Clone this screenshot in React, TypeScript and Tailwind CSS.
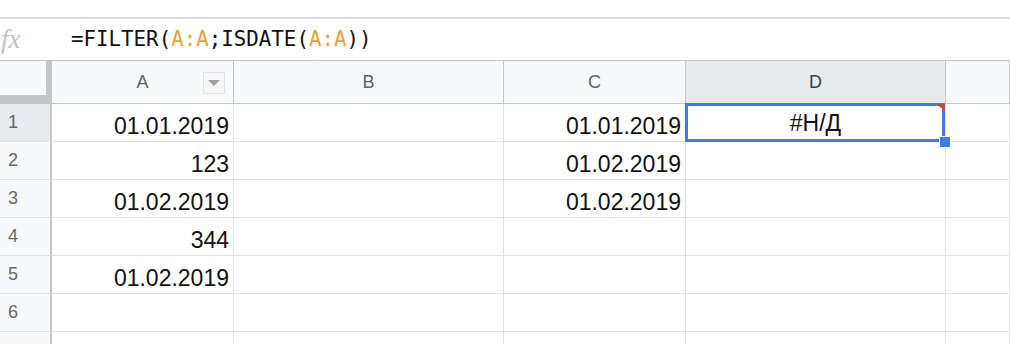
const cols = [
  { key: "A", w: "w-[182px]" },
  { key: "B", w: "w-[270px]" },
  { key: "C", w: "w-[182px]" },
  { key: "D", w: "w-[260px]" },
  { key: "E", w: "flex-1" },
];

const data: Record<number, Record<string, string>> = {
  1: { A: "01.01.2019", C: "01.01.2019" },
  2: { A: "123", C: "01.02.2019" },
  3: { A: "01.02.2019", C: "01.02.2019" },
  4: { A: "344" },
  5: { A: "01.02.2019" },
  6: {},
  7: {},
};

const cellFont = { fontFamily: '"Liberation Sans", Arial, sans-serif' };

function Formula() {
  return (
    <div className="flex h-[42px] items-center border-b border-[#c4c7c5] bg-white">
      <div
        className="w-[71px] pl-[1px] text-[27px] italic leading-none text-[#c2c2c2]"
        style={{ fontFamily: '"Liberation Serif", "Times New Roman", serif' }}
      >
        fx
      </div>
      <div
        className="text-[20.8px] leading-none text-[#111]"
        style={{ fontFamily: '"DejaVu Sans Mono", "Liberation Mono", monospace' }}
      >
        =FILTER(<span className="text-[#e9a23b]">A:A</span>;ISDATE(<span className="text-[#e9a23b]">A:A</span>))
      </div>
    </div>
  );
}

function HeaderRow() {
  return (
    <div className="flex h-[43px] border-b border-[#c4c7c5] bg-[#f8f9fa]" style={cellFont}>
      <div className="w-[52px] shrink-0 border-r-[6px] border-b-[8px] border-[#c4c7c5] bg-[#f8f9fa]" />
      {cols.map((c) => (
        <div
          key={c.key}
          className={`${c.w} relative flex shrink-0 items-center justify-center border-r border-[#c4c7c5] text-[18px] ${
            c.key === "D" ? "bg-[#e8eaed] text-[#3c4043]" : "text-[#5f6368]"
          }`}
        >
          {c.key === "E" ? "" : c.key}
          {c.key === "A" && (
            <div className="absolute right-[8px] top-[11px] flex h-[22px] w-[22px] items-center justify-center border border-[#e3e3e3] bg-[#f6f6f6]">
              <div className="h-0 w-0 border-x-[6px] border-t-[6px] border-x-transparent border-t-[#a0a0a0]" />
            </div>
          )}
        </div>
      ))}
    </div>
  );
}

function Row({ n }: { n: number }) {
  const row = data[n];
  return (
    <div className="flex h-[38px] shrink-0" style={cellFont}>
      <div
        className={`flex w-[52px] shrink-0 items-center border-r-2 border-b border-r-[#c4c7c5] border-b-[#e2e3e3] pl-[8px] text-[18px] text-[#666] ${
          n === 1 ? "bg-[#e8eaed]" : "bg-[#f8f9fa]"
        }`}
      >
        {n < 7 ? n : ""}
      </div>
      {cols.map((c) => {
        const selected = n === 1 && c.key === "D";
        return (
          <div
            key={c.key}
            className={`${c.w} relative flex shrink-0 items-end border-r border-b border-[#e2e3e3] text-[23px] leading-[25px] text-[#111] ${
              selected ? "z-10 justify-center pb-[5px]" : "justify-end pb-[2px] pr-[4px]"
            }`}
          >
            {selected ? "#Н/Д" : row[c.key] ?? ""}
            {selected && (
              <>
                <div className="pointer-events-none absolute -left-[1px] -top-[1px] bottom-[-1px] right-0 border-[3px] border-[#3d7ee0]" />
                <div className="absolute right-0 top-0 h-0 w-0 border-l-[9px] border-t-[7px] border-l-transparent border-t-[#c64a3b]" />
                <div className="absolute -bottom-[7px] -right-[6px] h-[12px] w-[12px] border border-white bg-[#3d7ee0]" />
              </>
            )}
          </div>
        );
      })}
    </div>
  );
}

export default function App() {
  return (
    <div className="h-[344px] w-[1010px] overflow-hidden bg-white">
      <div className="h-[19px] border-b-2 border-[#dadce0] bg-white" />
      <Formula />
      <HeaderRow />
      {[1, 2, 3, 4, 5, 6, 7].map((n) => (
        <Row key={n} n={n} />
      ))}
    </div>
  );
}
